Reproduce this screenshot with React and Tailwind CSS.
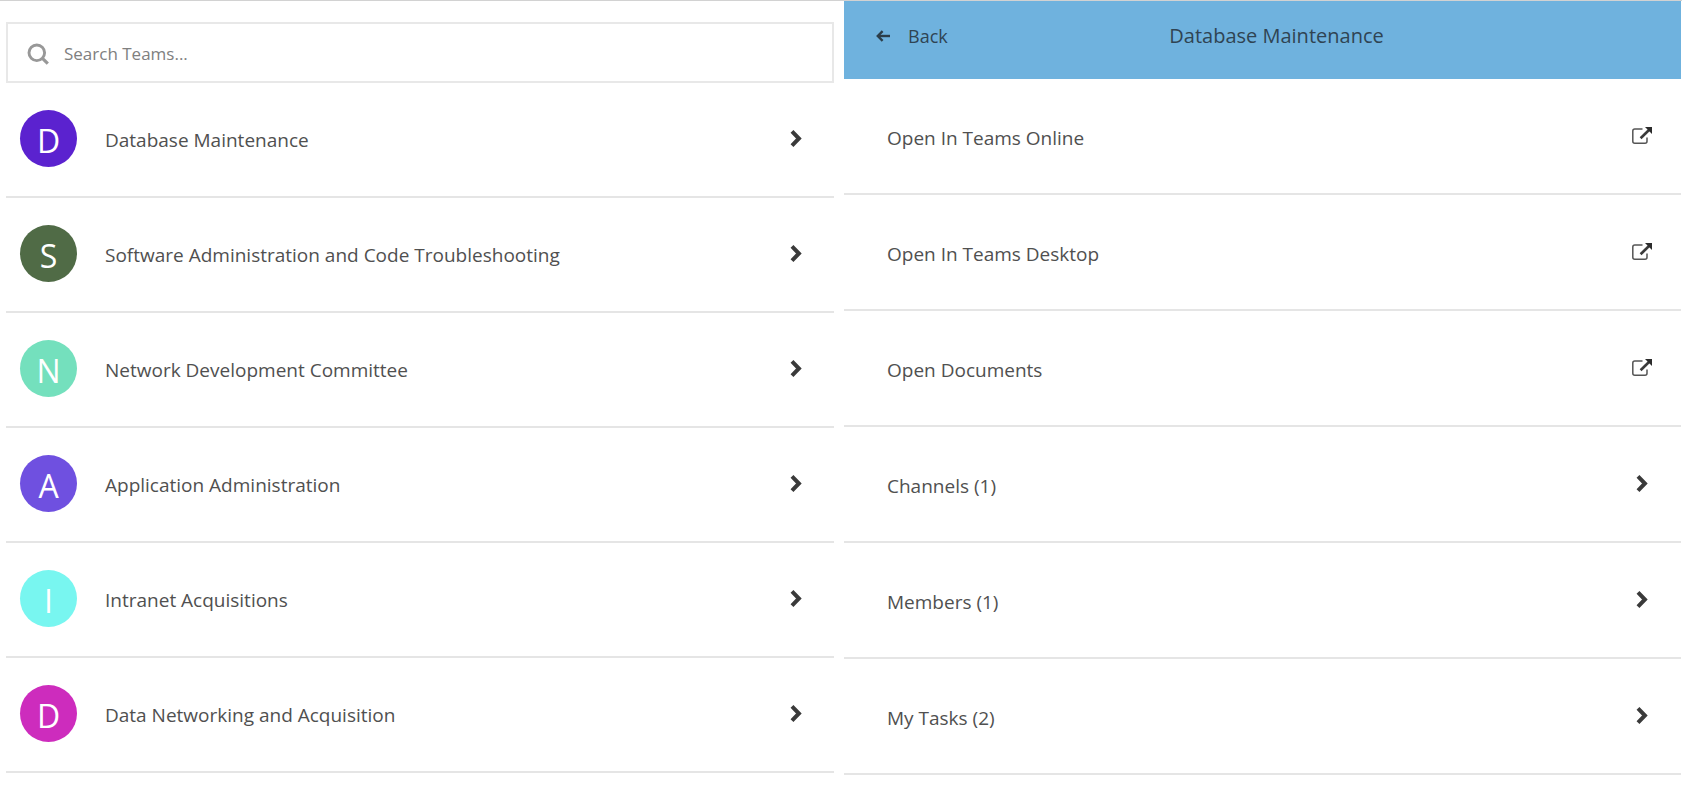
const teams = [
  { name: "Database Maintenance", color: "bg-[#5b22cf]" },
  { name: "Software Administration and Code Troubleshooting", color: "bg-[#506b46]" },
  { name: "Network Development Committee", color: "bg-[#74e0bd]" },
  { name: "Application Administration", color: "bg-[#6f50e0]" },
  { name: "Intranet Acquisitions", color: "bg-[#78f6f0]" },
  { name: "Data Networking and Acquisition", color: "bg-[#cd2cbd]" },
];

const links = ["Open In Teams Online", "Open In Teams Desktop", "Open Documents"];
const sections = ["Channels (1)", "Members (1)", "My Tasks (2)"];

function Chevron() {
  return (
    <svg className="h-5 w-3 shrink-0" viewBox="0 0 12 20" fill="none" stroke="#3a3a3a" strokeWidth="4" aria-hidden="true">
      <path d="M2 2.4L8.9 9.5L2 16.6" />
    </svg>
  );
}

function ExternalIcon() {
  return (
    <svg className="h-5 w-[22px] shrink-0" viewBox="0 0 22 20" fill="none" stroke="#555" aria-hidden="true">
      <path d="M11.5 2.9H3.8Q1.8 2.9 1.8 5V15.2Q1.8 17.2 3.8 17.2H14Q16 17.2 16 15.2V11.5" strokeWidth="1.5" />
      <path d="M9.6 12.2L18 4" strokeWidth="2.6" stroke="#3a3a3a" />
      <path d="M14 .9H21V8Z" fill="#2c2c2c" stroke="none" />
    </svg>
  );
}

function SearchIcon() {
  return (
    <svg className="h-[22px] w-[22px] shrink-0" viewBox="0 0 22 22" fill="none" stroke="#989898" aria-hidden="true">
      <circle cx="9.8" cy="9.8" r="7.8" strokeWidth="2.9" />
      <path d="M15.2 15.2L20.8 20.6" strokeWidth="3.2" />
    </svg>
  );
}

function BackArrow() {
  return (
    <svg className="h-3 w-[14px] shrink-0" viewBox="0 0 14 12" fill="none" stroke="#2c3e4a" aria-hidden="true">
      <path d="M6.6 1.2L1.8 6L6.6 10.8" strokeWidth="2.4" />
      <path d="M2 6H14" strokeWidth="2.4" />
    </svg>
  );
}

export default function App() {
  return (
    <div className="border-t border-[#d2d2d2] bg-white font-['Open_Sans','Noto_Sans',sans-serif] text-[19px] leading-7 text-[#505050]">
      <div className="grid grid-cols-[834fr_837fr] gap-[10px] pr-px">
        <section className="min-w-0 pl-[6px] pt-[21px]" aria-label="Teams">
          <label className="flex h-[61px] items-center gap-[15px] border-2 border-[#e8e8e8] pl-[19px] pt-0.5">
            <SearchIcon />
            <input
              type="search"
              aria-label="Search Teams"
              placeholder="Search Teams..."
              className="min-w-0 flex-1 text-[17px] outline-none placeholder:text-[#808080]"
            />
          </label>
          <ul>
            {teams.map((team) => (
              <li key={team.name}>
                <button type="button" className="flex h-[115px] w-full items-center border-b-2 border-[#e5e5e5] pb-0.5 pl-[14px] pr-8 text-left">
                  <span className={`flex size-[57px] shrink-0 items-center justify-center rounded-full pt-1 text-[32px] font-medium text-white ${team.color}`}>
                    {team.name[0]}
                  </span>
                  <span className="ml-7 flex-1 pt-[3px]">{team.name}</span>
                  <Chevron />
                </button>
              </li>
            ))}
          </ul>
        </section>
        <section className="min-w-0" aria-label="Database Maintenance">
          <header className="grid h-[78px] grid-cols-[1fr_auto_1fr] items-start bg-[#6fb2de] pl-8 pr-1 pt-[21px] text-[#2f4453]">
            <button type="button" className="flex items-center gap-[18px] justify-self-start text-[18px]">
              <BackArrow />
              Back
            </button>
            <h1 className="text-xl leading-7">Database Maintenance</h1>
          </header>
          <ul>
            {links.map((label) => (
              <li key={label}>
                <a href="#" className="flex h-[116px] items-center justify-between border-b-2 border-[#e5e5e5] pl-[43px] pr-7">
                  <span className="pt-1">{label}</span>
                  <ExternalIcon />
                </a>
              </li>
            ))}
            {sections.map((label) => (
              <li key={label}>
                <button type="button" className="flex h-[116px] w-full items-center justify-between border-b-2 border-[#e5e5e5] pl-[43px] pr-[33px]">
                  <span className="pt-1">{label}</span>
                  <Chevron />
                </button>
              </li>
            ))}
          </ul>
        </section>
      </div>
    </div>
  );
}
